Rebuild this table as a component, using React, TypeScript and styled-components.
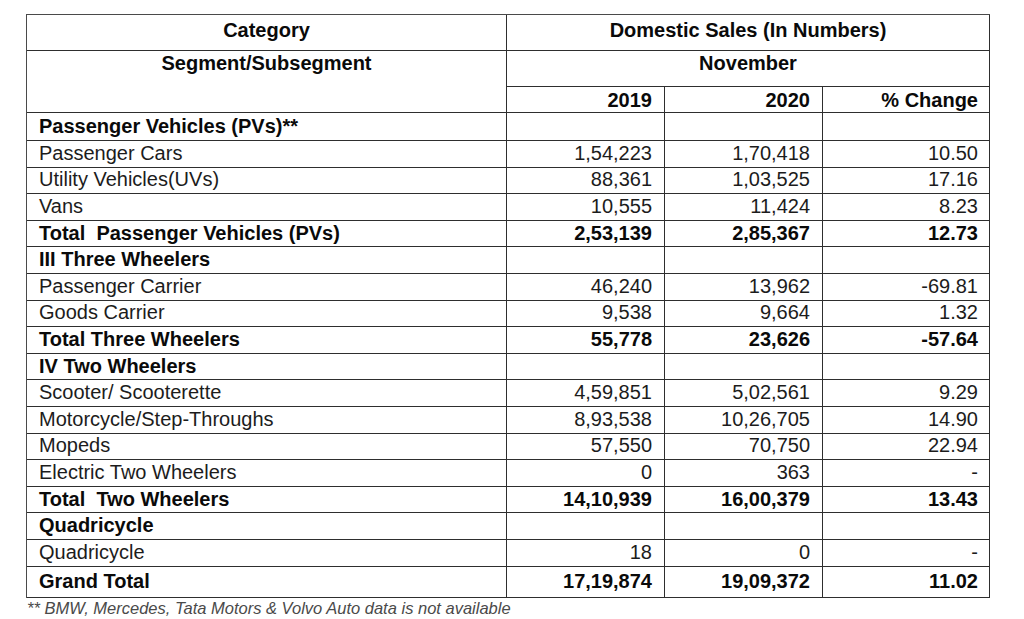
import React from "react";
import styled, { createGlobalStyle } from "styled-components";

const Global = createGlobalStyle`
  html, body { margin: 0; padding: 0; background: #fff; }
  body { font-family: "Liberation Sans", Arial, sans-serif; }
`;

const Page = styled.div`
  padding: 14px 0 0 26px;
`;

const Grid = styled.div`
  display: grid;
  grid-template-columns: 480px 158px 158px 167px;
  grid-template-rows: 36px 36px 26px 28px repeat(16, 26.6px) 31px;
  width: max-content;
  border-top: 1px solid #4a4a4a;
  border-left: 1px solid #4a4a4a;
`;

type CellProps = {
  $span?: number;
  $rows?: number;
  $align?: "left" | "right" | "center";
  $bold?: boolean;
  $top?: number;
  $pr?: number;
};

const Cell = styled.div<CellProps>`
  box-sizing: border-box;
  border-right: 1px solid #2e2e2e;
  border-bottom: 1px solid #2e2e2e;
  grid-column: span ${(p) => p.$span ?? 1};
  grid-row: span ${(p) => p.$rows ?? 1};
  display: flex;
  align-items: ${(p) => (p.$top !== undefined ? "flex-start" : "center")};
  justify-content: ${(p) =>
    p.$align === "right" ? "flex-end" : p.$align === "center" ? "center" : "flex-start"};
  padding: ${(p) => (p.$top !== undefined ? `${p.$top}px` : "0")} ${(p) => p.$pr ?? 12}px
    ${(p) => (p.$top !== undefined ? "0" : "1px")} 12px;
  font-size: 20px;
  line-height: 23px;
  font-weight: ${(p) => (p.$bold ? 700 : 400)};
  color: ${(p) => (p.$bold ? "#0a0a0a" : "#1c1c1c")};
  white-space: pre;
  overflow: hidden;
`;

const Footnote = styled.div`
  margin-top: 1px;
  padding-left: 1px;
  font-size: 16.5px;
  font-style: italic;
  color: #4a4a4a;
  line-height: 19px;
`;

type Kind = "section" | "item" | "total";
type Row = { label: string; kind: Kind; a?: string; b?: string; c?: string };

const rows: Row[] = [
  { label: "Passenger Vehicles (PVs)**", kind: "section" },
  { label: "Passenger Cars", kind: "item", a: "1,54,223", b: "1,70,418", c: "10.50" },
  { label: "Utility Vehicles(UVs)", kind: "item", a: "88,361", b: "1,03,525", c: "17.16" },
  { label: "Vans", kind: "item", a: "10,555", b: "11,424", c: "8.23" },
  { label: "Total  Passenger Vehicles (PVs)", kind: "total", a: "2,53,139", b: "2,85,367", c: "12.73" },
  { label: "III Three Wheelers", kind: "section" },
  { label: "Passenger Carrier", kind: "item", a: "46,240", b: "13,962", c: "-69.81" },
  { label: "Goods Carrier", kind: "item", a: "9,538", b: "9,664", c: "1.32" },
  { label: "Total Three Wheelers", kind: "total", a: "55,778", b: "23,626", c: "-57.64" },
  { label: "IV Two Wheelers", kind: "section" },
  { label: "Scooter/ Scooterette", kind: "item", a: "4,59,851", b: "5,02,561", c: "9.29" },
  { label: "Motorcycle/Step-Throughs", kind: "item", a: "8,93,538", b: "10,26,705", c: "14.90" },
  { label: "Mopeds", kind: "item", a: "57,550", b: "70,750", c: "22.94" },
  { label: "Electric Two Wheelers", kind: "item", a: "0", b: "363", c: "-" },
  { label: "Total  Two Wheelers", kind: "total", a: "14,10,939", b: "16,00,379", c: "13.43" },
  { label: "Quadricycle", kind: "section" },
  { label: "Quadricycle", kind: "item", a: "18", b: "0", c: "-" },
  { label: "Grand Total", kind: "total", a: "17,19,874", b: "19,09,372", c: "11.02" },
];

export default function App() {
  return (
    <Page>
      <Global />
      <Grid>
        <Cell $align="center" $bold $top={4}>Category</Cell>
        <Cell $span={3} $align="center" $bold $top={4}>Domestic Sales (In Numbers)</Cell>
        <Cell $rows={2} $align="center" $bold $top={1}>Segment/Subsegment</Cell>
        <Cell $span={3} $align="center" $bold $top={1}>November</Cell>
        <Cell $align="right" $bold $top={2}>2019</Cell>
        <Cell $align="right" $bold $top={2}>2020</Cell>
        <Cell $align="right" $bold $top={2} $pr={11}>% Change</Cell>
        {rows.map((r, i) => {
          const bold = r.kind !== "item";
          return (
            <React.Fragment key={i}>
              <Cell $bold={bold}>{r.label}</Cell>
              <Cell $align="right" $bold={bold}>{r.a ?? ""}</Cell>
              <Cell $align="right" $bold={bold}>{r.b ?? ""}</Cell>
              <Cell $align="right" $bold={bold} $pr={11}>{r.c ?? ""}</Cell>
            </React.Fragment>
          );
        })}
      </Grid>
      <Footnote>** BMW, Mercedes, Tata Motors &amp; Volvo Auto data is not available</Footnote>
    </Page>
  );
}
